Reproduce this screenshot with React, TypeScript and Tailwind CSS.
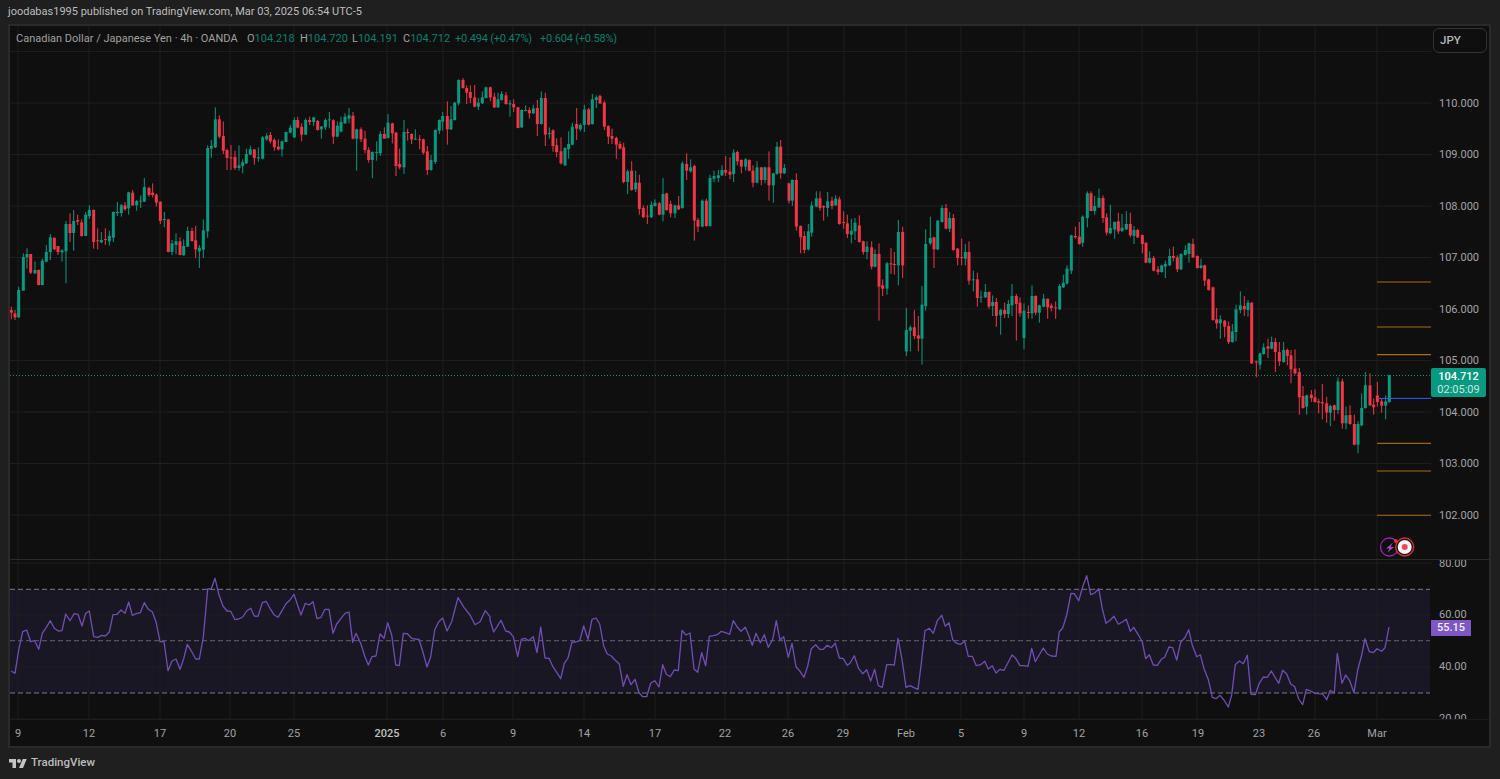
import React from 'react';

// candles read off the chart: colour, x, body top, body bottom, wick top, wick bottom (3x coordinates per block)
const blocks: { x0: number; y0: number; rows: string }[] = [
  {
    x0: 0,
    y0: 80,
    rows: `r 34 690 698 680 718,r 45 700 712 690 720,g 56 630 712 620 714,g 70 531 632 520 632,g 81 522 532 505 566,r 92 522 578 522 582,g 105 570 580 544 582,r 116 570 615 568 616,g 127 542 615 536 616,g 139 516 545 495 547,g 151 472 516 462 540,r 163 473 508 473 510,r 174 498 516 498 525,g 186 511 517 508 545,g 198 432 514 423 610,r 210 432 459 400 486,g 221 423 459 390 512,r 233 420 425 404 435,r 245 427 468 418 470,g 257 404 468 396 468,g 268 390 408 376 416,r 281 390 486 388 506,r 293 481 484 445 508,g 304 480 487 456 490,r 316 477 480 445 495,g 328 468 484 452 497,g 340 396 473 394 486,g 352 396 398 366 408,g 364 376 399 372 410,r 375 376 388 366 392,g 386 337 385 335 404,r 398 338 376 330 378,g 410 363 376 360 392,g 422 362 365 346 384,g 433 321 365 294 366,r 447 324 345 320 350,r 458 338 345 310 352,r 469 344 368 340 380,r 481 365 423 364 432,g 493 417 419 396 442,r 505 418 516 418 517,g 516 490 516 480 525,g 528 484 495 460 522,r 540 484 525 472 526,g 551 498 526 478 527,g 563 453 500 440 501,r 576 453 483 443 485,r 587 481 508 437 534,g 598 503 514 495 564,g 610 451 509 418 534,g 623 204 454 196 473,g 634 198 206 180 233,g 646 118 202 82 204,r 658 118 170 106 175,r 670 168 212 124 222,r 681 210 234 206 270,r 693 232 234 195 270,r 705 231 264 212 270,g 717 256 264 196 272,g 728 247 258 238 280,g 739 222 250 206 252,g 751 208 224 196 226,r 763 208 234 208 254,g 775 232 234 202 245,g 788 172 236 168 238,g 800 167 178 160 182,r 811 165 184 156 190,r 823 180 202 175 212,r 835 200 208 178 212,g 846 184 208 182 230,g 858 156 186 155 186,g 871 143 158 135 160,g 883 120 172 112 174,r 893 120 143 110 145,r 905 140 164 130 184,g 917 120 164 115 165,r 929 120 126 110 135,g 941 112 126 110 138,r 953 123 150 120 152,g 964 140 148 138 176,g 976 120 142 115 150,g 988 118 120 96 145,r 1000 121 170 118 192,g 1012 137 170 124 171,g 1023 126 155 110 157,g 1035 110 130 100 132,g 1047 106 116 84 130,r 1059 107 176 96 178,g 1070 148 176 146 272`,
  },
  {
    x0: 360,
    y0: 70,
    rows: `r 3 178 208 172 216,r 15 206 240 182 250,r 26 240 270 232 278,g 37 246 270 244 324,g 50 246 248 214 272,g 61 192 250 184 258,r 73 192 206 172 206,g 84 158 204 132 206,r 97 160 190 158 220,r 108 188 288 186 318,r 119 282 292 236 298,g 132 186 292 150 312,r 143 186 188 176 212,r 155 192 208 190 222,g 166 206 208 178 210,r 179 208 210 195 238,r 190 208 248 206 254,r 202 244 300 228 315,g 213 270 300 255 302,g 226 180 276 178 282,g 238 150 182 148 192,g 248 138 155 126 182,r 262 138 178 94 224,g 273 148 178 108 180,g 284 98 150 96 152,g 296 30 100 28 106,r 309 30 54 24 56,r 320 54 68 46 102,r 331 66 84 46 100,r 344 82 110 45 112,g 355 98 110 84 120,g 367 82 100 64 102,g 378 52 84 50 85,r 391 52 82 50 94,r 403 80 112 68 114,g 414 88 112 68 114,g 425 72 90 64 92,r 438 76 102 66 104,g 450 100 102 90 140,r 461 102 112 88 126,r 474 112 174 110 175,g 485 120 172 118 174,g 497 120 122 106 124,r 508 120 130 112 146,g 520 115 130 104 132,r 532 114 162 90 198,g 544 84 162 64 164,r 556 84 194 68 228,g 568 189 191 172 206,r 579 181 228 178 245,r 590 226 246 205 262,r 603 244 280 202 284,g 615 234 286 232 288,g 626 222 238 184 266,g 637 170 224 158 226,r 650 162 176 114 210,g 661 165 178 160 184,g 673 118 165 104 186,r 686 118 164 114 166,g 697 88 162 72 164,g 709 82 90 76 114,r 720 78 100 74 102,r 733 98 170 92 180,r 745 168 200 166 222,r 756 198 206 176 222,r 769 204 224 200 266,r 780 222 236 214 238,r 791 232 336 218 340,g 803 304 336 298 372,r 815 302 360 274 362,g 827 338 358 302 366,r 838 338 417 314 434,r 850 414 442 406 444,r 862 437 440 406 462,g 874 404 442 394 444,g 885 398 408 388 410,r 898 400 434 396 436,g 909 372 434 324 454,r 920 370 420 368 422,r 932 402 430 392 442,g 945 406 430 404 444,r 956 406 418 378 420,g 967 280 414 274 416,r 980 282 302 250 330,g 992 292 304 268 308,r 1003 288 452 284 512,r 1014 450 470 444 486,g 1027 392 470 388 472,r 1039 392 468 386 470,g 1050 324 468 314 470,g 1062 318 326 302 336,g 1075 316 324 300 336`,
  },
  {
    x0: 720,
    y0: 130,
    rows: `g 6 120 136 106 138,r 17 120 128 78 138,r 30 125 134 82 148,g 41 68 132 58 156,r 52 66 94 62 106,r 64 90 110 88 130,g 77 88 110 84 122,r 88 90 122 88 124,r 99 122 158 106 172,g 111 112 158 94 160,r 124 112 150 112 166,g 135 112 150 110 160,r 147 112 166 64 212,g 160 130 166 128 218,g 171 50 132 36 134,r 182 50 130 30 146,g 193 114 130 102 132,r 207 160 212 158 220,g 217 150 212 148 228,r 229 150 290 130 302,r 242 288 322 286 370,r 253 318 360 304 370,g 265 304 358 282 362,g 275 226 308 214 320,g 289 205 230 184 232,r 300 205 234 184 242,r 311 228 232 226 272,g 323 214 234 186 260,r 336 212 228 200 238,g 347 206 226 196 228,r 358 208 282 200 284,r 371 276 278 244 296,r 382 280 312 254 324,g 394 302 314 266 340,g 405 278 304 264 330,r 418 286 336 256 338,r 430 334 366 332 374,g 441 350 366 334 388,r 455 352 410 334 418,g 465 372 410 358 412,r 477 372 470 340 572,r 488 466 476 448 498,g 501 400 476 396 494,r 513 400 402 354 432,r 523 402 405 366 434,g 535 306 406 270 466,r 548 306 406 290 444,g 559 600 664 534 678,g 571 592 602 586 664,r 583 592 618 540 628,r 595 616 626 558 664,g 606 524 626 468 704,g 617 342 528 298 542,g 631 324 340 260 346,r 642 322 358 320 414,g 653 272 358 270 360,g 666 234 276 226 278,r 678 234 296 222 298,g 689 264 296 246 306,r 700 264 360 252 362,r 713 356 384 354 406,r 725 381 383 326 406,g 736 366 386 342 406,r 747 366 452 334 464,g 760 448 450 422 484,r 772 448 504 428 530,g 783 500 502 482 518,g 796 486 502 462 504,r 807 486 530 484 536,g 818 516 528 496 558,r 829 516 558 504 590,g 842 540 556 536 614,r 854 540 552 518 564,g 865 522 552 510 564,g 876 498 526 462 558,r 889 498 522 492 632,r 900 518 550 502 560,g 912 542 624 520 658,r 925 546 549 526 566,g 936 498 550 466 566,r 947 498 548 496 556,g 958 526 548 524 578,g 971 506 530 492 532,r 983 506 532 506 566,r 994 527 534 520 544,r 1007 532 535 514 566,g 1019 468 538 462 540,g 1030 458 472 434 474,g 1041 416 460 406 464,g 1054 316 422 314 432,r 1066 318 322 290 326,r 1078 320 342 276 344`,
  },
  {
    x0: 1060,
    y0: 180,
    rows: `g 68 110 188 106 200,g 82 40 114 34 142,r 93 40 93 34 94,g 104 78 93 48 104,g 117 54 82 26 84,r 129 54 114 46 128,r 140 112 158 100 166,g 151 144 160 74 162,g 164 126 148 124 176,r 175 124 154 98 162,g 186 143 153 102 156,g 199 132 148 94 150,r 211 132 166 98 172,g 222 150 168 138 192,r 233 150 172 146 174,r 247 165 192 164 220,r 258 188 248 188 250,g 269 234 248 214 250,r 281 234 272 228 274,r 294 268 276 258 284,g 305 256 276 254 278,g 316 252 260 242 294,g 329 228 256 206 258,r 340 228 234 200 244,r 352 232 268 226 276,g 363 222 268 220 270,g 376 210 225 196 226,g 387 190 222 188 248,r 399 192 232 176 234,r 412 228 264 226 266,g 423 256 264 236 266,r 434 256 302 254 318,r 446 298 330 296 332,r 459 322 420 320 422,r 470 418 430 384 446,g 481 418 430 406 476,r 494 422 440 420 472,r 506 438 486 424 492,g 517 454 486 432 488,g 528 388 456 374 484,g 541 376 390 334 400,r 553 378 388 348 408,g 564 368 390 360 410,r 575 368 550 366 552,r 589 544 547 542 592,g 600 520 554 518 568,g 611 502 522 490 524,r 624 499 506 476 534,g 635 486 506 470 508,r 646 486 516 474 576,r 658 516 544 486 558,g 671 510 546 486 548,r 682 510 528 506 556,r 693 526 568 510 610,r 705 566 580 508 584,r 718 576 652 564 704,r 729 648 684 618 686,g 740 646 680 644 704,r 754 644 654 630 666,r 765 652 666 628 668,r 776 664 668 656 700,r 787 666 670 612 718,r 800 670 698 650 728,g 811 678 698 674 738,r 823 676 690 674 722,g 834 604 690 592 702,r 847 604 730 596 746,g 858 706 730 680 748,r 870 705 732 676 734,r 883 732 794 704 796,g 894 732 794 724 820,g 905 684 736 640 738,g 916 616 684 576 686,r 930 616 676 580 678,r 941 674 682 656 704,r 952 646 666 606 680,r 965 664 677 656 698,g 977 664 677 646 718,g 988 586 666 584 668`,
  },
];

const candles = blocks.flatMap((b) =>
  b.rows.split(',').map((row) => {
    const [c, x, top, bot, hi, lo] = row.split(' ');
    return {
      color: c === 'g' ? '#089981' : '#f23645',
      x: b.x0 + Number(x) / 3,
      top: b.y0 + Number(top) / 3,
      bot: b.y0 + Number(bot) / 3,
      hi: b.y0 + Number(hi) / 3,
      lo: b.y0 + Number(lo) / 3,
    };
  }),
);

const rsiBlocks: { x0: number; y0: number; pts: string }[] = [
  {
    x0: 0,
    y0: 550,
    pts: '33,363 45,370 56,300 68,245 80,240 92,275 104,272 116,298 127,250 139,232 151,212 163,235 175,243 186,242 197,192 210,212 222,191 234,193 246,228 257,190 268,183 281,260 293,262 305,256 316,258 328,246 339,194 351,193 363,180 375,190 386,156 397,196 409,191 421,188 433,158 445,178 457,185 468,215 480,275 492,275 504,362 516,333 528,327 540,358 551,326 562,283 575,305 587,327 598,327 610,262 623,117 634,116 645,85 657,135 669,168 681,183 692,184 705,209 716,207 728,201 740,183 752,175 763,198 774,199 787,158 798,154 810,175 822,194 834,202 846,182 858,161 870,150 882,133 892,163 903,195 916,160 927,165 939,155 951,206 963,202 975,178 987,178 999,250 1010,222 1023,205 1035,190 1047,186 1058,277 1068,250 1082,280 1094,318 1105,345 1116,320 1128,318 1140,252 1152,265 1163,218 1175,255 1187,345 1198,347 1210,250 1222,251 1235,265 1245,267 1257,268 1270,310 1281,351 1292,320 1304,240 1316,215 1328,204 1341,243 1355,215 1374,143 1392,172 1410,195 1425,224 1440,215 1456,182 1470,200',
  },
  {
    x0: 490,
    y0: 570,
    pts: '0,150 11,186 33,151 47,183 58,186 70,200 83,260 94,208 105,205 116,212 130,200 141,248 152,171 165,264 177,265 188,289 200,307 212,326 223,280 234,264 246,216 258,216 269,212 281,168 294,208 306,148 318,144 329,162 341,228 352,252 364,258 376,271 388,282 400,349 411,314 423,344 435,328 447,368 458,380 470,380 482,340 494,332 507,351 518,284 529,313 541,320 553,300 565,302 576,181 588,195 600,189 612,297 623,307 635,248 647,287 658,199 670,197 682,194 694,184 706,188 719,193 730,152 741,170 753,184 766,172 776,196 787,226 798,190 811,218 823,194 835,232 848,208 859,152 870,210 881,200 895,262 906,220 918,290 930,304 942,322 953,288 964,236 977,224 989,238 1000,238 1012,226 1024,233 1036,220 1048,264 1060,266 1072,286',
  },
  {
    x0: 850,
    y0: 570,
    pts: '0,280 13,257 26,296 38,311 50,299 62,333 74,298 85,347 97,352 110,284 122,284 133,285 144,205 156,268 168,352 180,347 192,353 204,358 214,280 225,182 238,175 250,190 262,152 275,136 286,169 297,158 308,209 320,220 332,223 344,214 355,259 367,259 379,287 392,284 404,274 415,297 427,287 438,309 450,298 462,301 486,255 497,265 510,287 522,287 534,289 545,235 556,275 568,254 580,234 592,252 604,258 618,259 628,185 638,174 650,135 663,70 673,71 686,92 698,50 710,17 722,74 734,69 746,56 757,116 768,160 780,151 792,139 805,163 817,156 829,148 841,184 851,172 864,193 877,216 887,266 898,254 910,285 922,286 934,268 944,262 957,231 968,233 980,270 992,216 1004,204 1016,179 1027,226 1040,260 1051,254 1062,296 1074,326 1080,350',
  },
  {
    x0: 1180,
    y0: 550,
    pts: '97,442 108,446 120,436 132,450 145,471 155,435 166,344 178,333 190,341 202,316 213,433 226,434 238,400 250,381 262,382 274,363 296,400 308,361 320,372 332,402 344,410 356,447 368,464 379,418 392,423 404,430 416,431 428,432 440,449 451,421 463,429 472,310 486,400 497,375 509,392 522,428 533,360 545,315 555,266 568,305 580,308 591,296 605,304 615,293 627,231',
  },
];

const rsiPoints = rsiBlocks
  .flatMap((b) =>
    b.pts.split(' ').map((p) => {
      const [x, y] = p.split(',').map(Number);
      return `${(b.x0 + x / 3).toFixed(1)},${(b.y0 + y / 3).toFixed(1)}`;
    }),
  )
  .join(' ');

const gridX = [18, 89, 160, 230, 294, 387, 443, 513, 584, 655, 725, 788, 844, 906, 961, 1024, 1079, 1142, 1197, 1259, 1315, 1377];
const mainGridY = [51.5, 103, 154.5, 206, 257.5, 309, 360.5, 412, 463.5, 515];
const rsiGridY = [563, 615, 667, 719];
const levels = [
  { y: 282, c: '#a86c16' },
  { y: 327, c: '#a86c16' },
  { y: 354.7, c: '#d9820f' },
  { y: 443.3, c: '#c47a14' },
  { y: 471, c: '#a86c16' },
  { y: 515.3, c: '#a86c16' },
];
const prices = ['110.000', '109.000', '108.000', '107.000', '106.000', '105.000', '104.000', '103.000', '102.000'];
const rsiTicks = ['80.00', '60.00', '40.00', '20.00'];
const timeLabels = [
  ['9', 18], ['12', 89], ['17', 160], ['20', 230], ['25', 294], ['2025', 387], ['6', 443], ['9', 513], ['14', 584], ['17', 655], ['22', 725],
  ['26', 788], ['29', 843], ['Feb', 906], ['5', 961], ['9', 1024], ['12', 1079], ['16', 1142], ['19', 1198], ['23', 1259], ['26', 1314], ['Mar', 1377],
] as const;

const GridLines = ({ ys, y1, y2 }: { ys: number[]; y1: number; y2: number }) => (
  <g stroke="#1e1e1e" strokeWidth="1">
    {gridX.map((x) => (
      <line key={x} x1={x} x2={x} y1={y1} y2={y2} />
    ))}
    {ys.map((y) => (
      <line key={y} x1={10} x2={1431} y1={y} y2={y} />
    ))}
  </g>
);

const MainChart = () => (
  <svg className="block h-[533px] w-[1421px] shrink-0" viewBox="10 26 1421 533">
    <GridLines ys={mainGridY} y1={26} y2={559} />
    <line x1="10" x2="1431" y1="375.5" y2="375.5" stroke="#0aa58c" strokeOpacity="0.8" strokeDasharray="1 2" />
    {candles.map((c, i) => (
      <g key={i} fill={c.color}>
        <rect x={c.x - 0.5} y={c.hi} width="1" height={Math.max(c.lo - c.hi, 1)} />
        <rect x={c.x - 1.5} y={c.top} width="3" height={Math.max(c.bot - c.top, 1)} />
      </g>
    ))}
    {levels.map((l) => (
      <line key={l.y} x1="1377" x2="1431" y1={l.y} y2={l.y} stroke={l.c} strokeWidth="1" />
    ))}
    <line x1="1379" x2="1431" y1="398.4" y2="398.4" stroke="#2962ff" strokeWidth="1" />
    {/* lightning + record markers */}
    <circle cx="1389.5" cy="547" r="9" fill="#0f0f0f" stroke="#9c27b0" strokeWidth="1.3" />
    <path d="M1392.6 542.8 l-6.4 5.6 h3.3 l-1.9 4.2 l6.4 -5.6 h-3.3 z" fill="#a84fc0" />
    <circle cx="1404.7" cy="547" r="9" fill="#0f0f0f" stroke="#d32f3c" strokeWidth="1.4" />
    <circle cx="1404.7" cy="547" r="7" fill="#f5f5f5" />
    <circle cx="1404.7" cy="547" r="3" fill="#f4455a" />
    <circle cx="1395.8" cy="541" r="2" fill="#e02e3d" />
  </svg>
);

const RsiChart = () => (
  <svg className="block h-[159px] w-[1421px] shrink-0" viewBox="10 560 1421 159">
    <rect x="10" y="589.3" width="1420" height="103.7" fill="#1a1724" />
    <GridLines ys={rsiGridY} y1={560} y2={719} />
    <g stroke="#787b86" strokeWidth="1" strokeDasharray="5 3">
      <line x1="10" x2="1430" y1="589.3" y2="589.3" />
      <line x1="10" x2="1430" y1="640.7" y2="640.7" strokeOpacity="0.75" />
      <line x1="10" x2="1430" y1="693" y2="693" />
    </g>
    <polyline points={rsiPoints} fill="none" stroke="#6f4fb3" strokeWidth="1.3" strokeLinejoin="round" />
  </svg>
);

export default function App() {
  return (
    <div className="flex h-[779px] w-[1500px] flex-col overflow-hidden bg-[#1f1f1f] [font-family:Roboto,sans-serif] text-[#b2b2b2]">
      <div className="flex h-6 items-center px-2 pt-px text-[11px] text-[#bdbdbd]">
        joodabas1995 published on TradingView.com, Mar 03, 2025 06:54 UTC-5
      </div>

      <div className="relative ml-2 flex h-[724px] w-[1483px] flex-col border-2 border-[#2a2a2a] bg-[#0f0f0f]">
        {/* legend */}
        <div className="absolute left-[6px] top-[5px] z-10 flex text-[11px] whitespace-nowrap text-[#a0a0a0]">
          <span className="w-[231px]">Canadian Dollar / Japanese Yen · 4h · OANDA</span>
          <span className="w-[53px]">O<span className="text-[#0a7f6c]">104.218</span></span>
          <span className="w-[52px]">H<span className="text-[#0a7f6c]">104.720</span></span>
          <span className="w-[51px]">L<span className="text-[#0a7f6c]">104.191</span></span>
          <span className="w-[52px]">C<span className="text-[#0a7f6c]">104.712</span></span>
          <span className="w-[85px] tracking-[-0.2px] text-[#0a7f6c]">+0.494 (+0.47%)</span>
          <span className="tracking-[-0.2px] text-[#0a7f6c]">+0.604 (+0.58%)</span>
        </div>

        {/* price pane */}
        <div className="flex h-[533px] overflow-hidden">
          <MainChart />
          <div className="relative flex-1 pl-2 pt-[52px] text-[11px] text-[#a3a3a3]">
            <button className="absolute left-[2px] top-[2px] flex h-[25px] w-[54px] items-center rounded-md border border-[#333] bg-[#0f0f0f] pl-[6px] text-[11.5px] font-medium text-[#b8b8b8]">
              JPY
            </button>
            {prices.map((p) => (
              <div key={p} className="flex h-[51.55px] items-center">
                {p}
              </div>
            ))}
            <div className="absolute left-0 top-[342px] flex h-[29px] w-[55px] flex-col items-center justify-center rounded-[2px] bg-[#089981] text-[11px] leading-[13px]">
              <span className="font-medium text-white">104.712</span>
              <span className="text-[#c8e6e0]">02:05:09</span>
            </div>
          </div>
        </div>

        <div className="h-px w-full bg-[#2a2a2a]" />

        {/* rsi pane */}
        <div className="flex h-[159px] overflow-hidden">
          <RsiChart />
          <div className="relative flex-1 pl-2 text-[11px] text-[#a3a3a3]">
            <div className="-mt-[22px]">
              {rsiTicks.map((t) => (
                <div key={t} className="flex h-[51.7px] items-center">
                  {t}
                </div>
              ))}
            </div>
            <div className="absolute left-0 top-[60px] flex h-4 w-10 items-center justify-center bg-[#7e57c2] font-medium text-[#f0f0f0]">
              55.15
            </div>
          </div>
        </div>

        {/* time axis */}
        <div className="relative h-[27px] border-t border-[#1c1c1c] text-[11px] text-[#a3a3a3]">
          {timeLabels.map(([t, x]) => (
            <span
              key={`${t}-${x}`}
              className={`absolute top-[6px] -translate-x-1/2 ${t === '2025' ? 'font-medium text-[#c0c0c0]' : ''}`}
              style={{ left: x - 10 }}
            >
              {t}
            </span>
          ))}
        </div>
      </div>

      {/* footer logo */}
      <div className="flex flex-1 items-center gap-1 pl-[9px] pb-[1px]">
        <svg viewBox="0 4 36 18" className="h-[9px] w-[18px] fill-[#c4c4c4]">
          <path d="M14 22H7V11H0V4h14v18zM28 22h-8l7.5-18h8L28 22z" />
          <circle cx="20" cy="8" r="4" />
        </svg>
        <span className="text-[11.5px] font-medium text-[#bdbdbd]">TradingView</span>
      </div>
    </div>
  );
}
